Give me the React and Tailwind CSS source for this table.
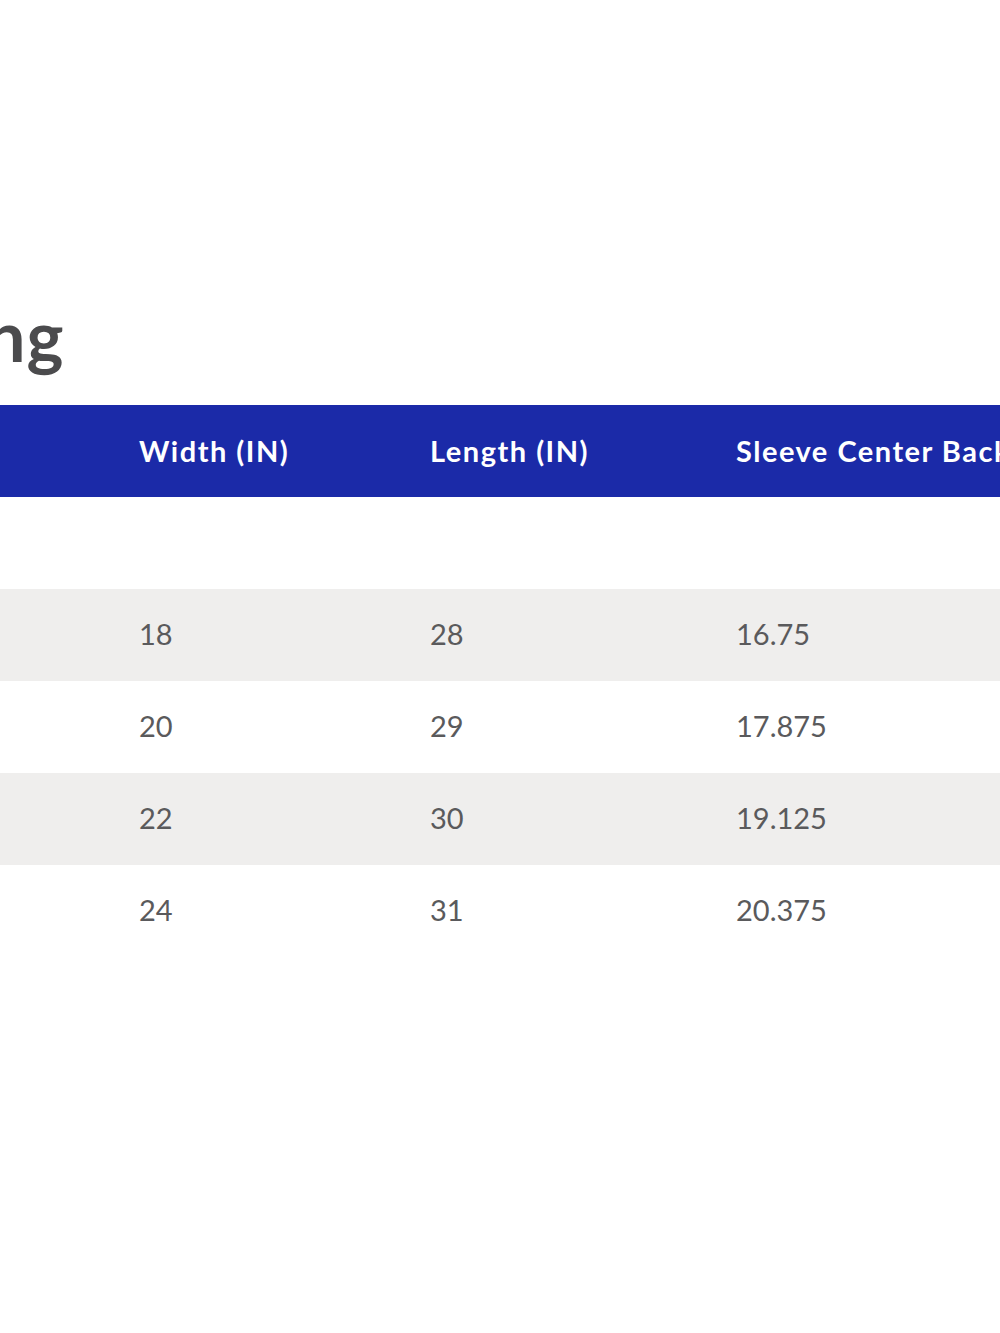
import React from 'react';

const rows = [
  { width: '', length: '', sleeve: '' },
  { width: '18', length: '28', sleeve: '16.75' },
  { width: '20', length: '29', sleeve: '17.875' },
  { width: '22', length: '30', sleeve: '19.125' },
  { width: '24', length: '31', sleeve: '20.375' },
];

const cols = 'grid grid-cols-[139px_291px_306px_1fr] items-center';

export default function App() {
  return (
    <div className="w-[1000px] h-[1333px] bg-white overflow-hidden font-['Lato',sans-serif]">
      <div className="pt-[290px] h-[405px]">
        <h2 className="-ml-[124px] text-[70px] leading-[90px] font-bold text-[#4b4b4d] whitespace-nowrap tracking-[1px]">
          Sizing
        </h2>
      </div>

      <div className={`${cols} h-[92px] bg-[#1b2aa8] text-white text-[29px] font-bold whitespace-nowrap tracking-[1.5px]`}>
        <div />
        <div>Width (IN)</div>
        <div>Length (IN)</div>
        <div>Sleeve Center Back (IN)</div>
      </div>

      {rows.map((row, i) => (
        <div
          key={i}
          className={`${cols} h-[92px] text-[29px] text-[#5a5a5c] ${i % 2 === 1 ? 'bg-[#efeeed]' : 'bg-white'}`}
        >
          <div />
          <div className="pb-[3px]">{row.width}</div>
          <div className="pb-[3px]">{row.length}</div>
          <div className="pb-[3px]">{row.sleeve}</div>
        </div>
      ))}
    </div>
  );
}
